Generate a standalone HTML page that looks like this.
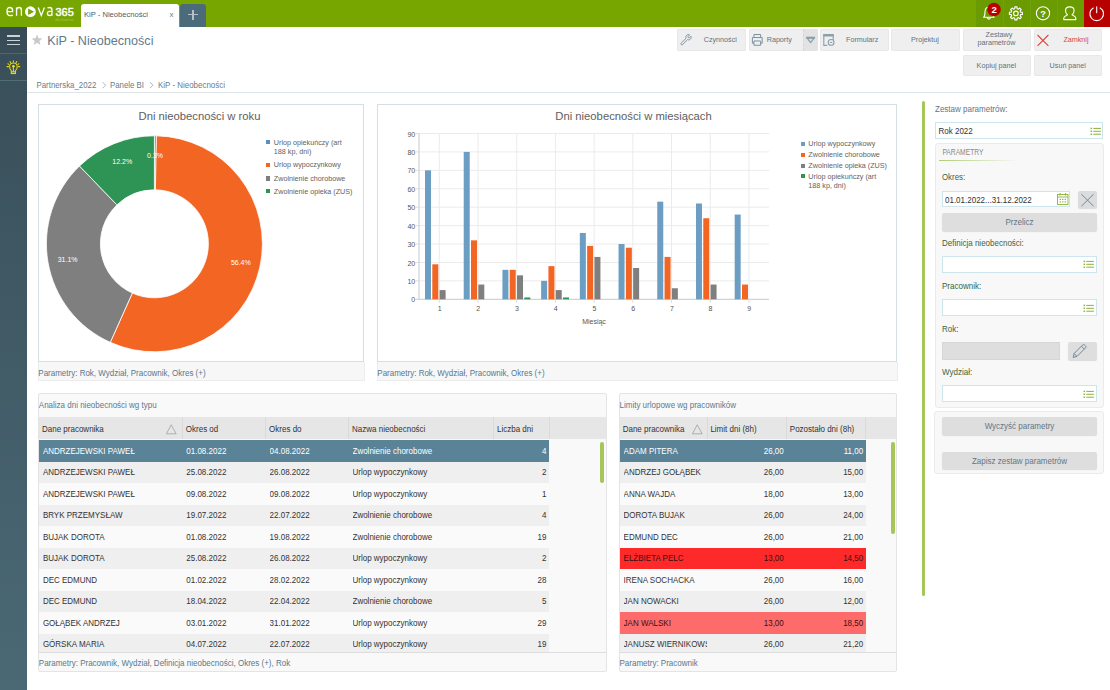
<!DOCTYPE html><html><head><meta charset="utf-8"><title>KiP - Nieobecności</title><style>
*{box-sizing:border-box;margin:0;padding:0}
html,body{width:1110px;height:690px;overflow:hidden;background:#fff;font-family:"Liberation Sans",sans-serif;color:#333}
.a{position:absolute}
.t{position:absolute;white-space:nowrap}
#top{left:0;top:0;width:1110px;height:27px;background:#77a600}
#side{left:0;top:27px;width:27px;height:663px;background:linear-gradient(#374b56 0,#3a505b 8%,#4a6975 100%)}
.tb{position:absolute;height:22px;background:#efefef;border-radius:2px;box-shadow:0 0 0 1px #e8e8e8 inset;font-size:8px;color:#5e7282;line-height:22px;text-align:center}
.panel{position:absolute;border:1px solid #d3dfe3;background:#fff}
.foot{position:absolute;background:#f7f7f7;font-size:8px;color:#58788e;white-space:nowrap}
.hdr{position:absolute;background:#e6e6e6;height:22px}
.hc{position:absolute;top:0;height:22px;line-height:22px;font-size:8px;color:#333;border-left:1px solid #d9d9d9;padding-left:3px;white-space:nowrap}
.row{position:absolute;height:21.6px;font-size:8px;color:#333;line-height:21.6px;white-space:nowrap}
.c{position:absolute;top:0;white-space:nowrap}
.r{text-align:right}
.sel{background:#5b8397;color:#fff;font-weight:bold}
.g{background:#efefef}
.wt{background:#fafafa}
.lbl{position:absolute;font-size:8px;color:#3e6a3e;white-space:nowrap}
.inp{position:absolute;height:17px;background:#fff;border:1px solid #cde5ed}
.btn{position:absolute;background:#dedede;border-radius:2px;box-shadow:0 1px 1px rgba(0,0,0,.12);font-size:8px;color:#5d7485;text-align:center}
</style></head><body>
<div id="top" class="a"></div>
<svg class="a" style="left:0;top:0" width="80" height="27" viewBox="0 0 80 27">
<g fill="none" stroke="#fff" stroke-width="1.3">
<path d="M7.0 11.6 H12.6 V10.6 C12.6 8.4 11.6 7.5 9.8 7.5 C7.9 7.5 7.0 8.7 7.0 11.5 C7.0 14.6 8.0 15.6 10.0 15.6 C11.2 15.6 12.1 15.4 12.8 15.1"/>
<path d="M16.55 7.4 V15.8 M16.55 10.0 C16.55 8.2 17.6 7.5 19.1 7.5 C20.7 7.5 21.4 8.3 21.4 10.0 V15.8"/>
<path d="M38.2 7.4 L41.3 15.5 L44.4 7.4"/>
<path d="M47.5 8.0 C48.1 7.6 48.9 7.5 49.8 7.5 C51.4 7.5 51.95 8.3 51.95 9.9 V15.8 M51.95 11.4 H49.6 C48.1 11.4 47.4 12.3 47.4 13.5 C47.4 14.9 48.2 15.5 49.6 15.5 C50.9 15.5 51.95 14.9 51.95 13.8"/>
</g>
<circle cx="30.4" cy="11.7" r="5.4" fill="#fff"/>
<path d="M28.1 8.4 L28.1 15.0 L34.1 11.7 Z" fill="#77a600"/>
<text x="55.5" y="15.7" font-family="Liberation Sans" font-size="11.4" fill="#fff" stroke="#fff" stroke-width="0.45" textLength="18.2" lengthAdjust="spacingAndGlyphs">365</text>
<text x="55.2" y="20.7" font-family="Liberation Sans" font-size="3" fill="#fff" fill-opacity=".35" textLength="18.6" lengthAdjust="spacingAndGlyphs">dla biznesu</text>
</svg>
<div class="a" style="left:81px;top:4px;width:98px;height:23px;background:#fff;border-radius:3px 3px 0 0"></div>
<div class="t" style="left:84px;top:10px;font-size:7.6px;color:#4c5c6c;line-height:9px">KiP - Nieobecności</div>
<div class="t" style="left:169.5px;top:10px;font-size:8px;color:#6a7a88;line-height:9px">x</div>
<div class="a" style="left:180px;top:4px;width:26px;height:23px;background:#4b6b7b;border-radius:3px 3px 0 0"></div>
<div class="a" style="left:188px;top:13.7px;width:10px;height:1.6px;background:#b4c1c8"></div>
<div class="a" style="left:192.2px;top:9.5px;width:1.6px;height:10px;background:#b4c1c8"></div>
<div class="a" style="left:976px;top:0;width:108px;height:27px;background:#6a9b00"></div>
<div class="a" style="left:1003px;top:0;width:1px;height:27px;background:#71a208"></div>
<div class="a" style="left:1030px;top:0;width:1px;height:27px;background:#71a208"></div>
<div class="a" style="left:1057px;top:0;width:1px;height:27px;background:#71a208"></div>
<div class="a" style="left:1084px;top:0;width:26px;height:27px;background:#b70000"></div>
<svg class="a" style="left:976px;top:0" width="134" height="27" viewBox="0 0 134 27">
<g fill="none" stroke="#fff" stroke-width="1.1" stroke-linecap="round" stroke-linejoin="round">
<path d="M7.6 17.3 C9.0 16.1 9.0 14.3 9.0 11.9 C9.0 9.0 10.7 7.3 12.9 7.3 C15.1 7.3 16.8 9.0 16.8 11.9 C16.8 14.3 16.8 16.1 18.2 17.3 Z"/>
<path d="M11.4 17.5 C11.4 19.6 14.4 19.6 14.4 17.5"/>
<path d="M38.72 8.64 L38.82 6.89 L40.98 6.89 L41.08 8.64 L42.43 9.20 L43.74 8.03 L45.27 9.56 L44.10 10.87 L44.66 12.22 L46.41 12.32 L46.41 14.48 L44.66 14.58 L44.10 15.93 L45.27 17.24 L43.74 18.77 L42.43 17.60 L41.08 18.16 L40.98 19.91 L38.82 19.91 L38.72 18.16 L37.37 17.60 L36.06 18.77 L34.53 17.24 L35.70 15.93 L35.14 14.58 L33.39 14.48 L33.39 12.32 L35.14 12.22 L35.70 10.87 L34.53 9.56 L36.06 8.03 L37.37 9.20 Z"/>
<circle cx="39.9" cy="13.4" r="2.3"/>
<circle cx="67.0" cy="13.3" r="6.6"/>
<path d="M87.8 19.6 L87.8 17.9 C87.8 16.5 90.2 15.7 91.5 14.8 C90.0 13.7 89.5 12.1 89.5 10.6 C89.5 8.2 91.0 6.9 93.8 6.9 C96.6 6.9 98.1 8.2 98.1 10.6 C98.1 12.1 97.6 13.7 96.1 14.8 C97.4 15.7 99.8 16.5 99.8 17.9 L99.8 19.6 Z"/>
<path d="M124.15 8.0 A6.8 6.8 0 1 1 117.25 8.0"/>
<path d="M120.7 6.9 V12.8"/>
</g>
<text x="67.1" y="16.6" text-anchor="middle" font-family="Liberation Sans" font-weight="bold" font-size="9.2" fill="#fff">?</text>
<circle cx="18" cy="9.5" r="6.8" fill="#bb0000"/>
<text x="18.1" y="12.9" text-anchor="middle" font-family="Liberation Sans" font-weight="bold" font-size="9.6" fill="#fff">2</text>
</svg>
<div id="side" class="a"></div>
<div class="a" style="left:0;top:53px;width:27px;height:1px;background:#4a6673"></div>
<div class="a" style="left:0;top:80px;width:27px;height:1px;background:#4f6c78"></div>
<div class="a" style="left:7px;top:35.3px;width:13px;height:1.5px;background:#c9d2d6"></div>
<div class="a" style="left:7px;top:39.5px;width:13px;height:1.5px;background:#c9d2d6"></div>
<div class="a" style="left:7px;top:43.7px;width:13px;height:1.5px;background:#c9d2d6"></div>
<svg class="a" style="left:0;top:54px" width="27" height="26" viewBox="0 0 27 26">
<g fill="none" stroke="#e2d41c" stroke-width="1.1" stroke-linecap="round">
<path d="M11.3 19.4 V16.6 C10.1 15.6 9.6 14.3 9.6 12.8 C9.6 10.5 11.3 9.0 13.4 9.0 C15.5 9.0 17.2 10.5 17.2 12.8 C17.2 14.3 16.7 15.6 15.5 16.6 V19.4 Z"/>
<path d="M13.4 12.4 V17.6 M11.8 17.8 H15.0"/>
<path d="M13.4 6.9 V7.9 M10.0 7.5 L10.6 8.5 M16.8 7.5 L16.2 8.5 M7.9 9.8 L8.8 10.4 M18.9 9.8 L18.0 10.4 M7.0 12.6 H8.5 M18.3 12.6 H19.8"/>
</g>
<rect x="10.9" y="18.9" width="5" height="1.2" fill="#e2d41c"/>
<circle cx="13.4" cy="12.3" r="1.3" fill="#f0e020"/>
</svg>
<svg class="a" style="left:31px;top:34px" width="12" height="12" viewBox="0 0 12 12"><path d="M6 0.6 L7.5 4.2 L11.4 4.5 L8.4 7.0 L9.4 10.9 L6 8.8 L2.6 10.9 L3.6 7.0 L0.6 4.5 L4.5 4.2 Z" fill="#c9c9c9"/></svg>
<div class="t" style="left:47.30px;top:33.99px;font-size:12.6px;line-height:14.49px;color:#62798b;transform:scaleY(1.05);transform-origin:50% 7.07px;">KiP - Nieobecności</div>
<div class="t" style="left:36.50px;top:80.96px;font-size:7.85px;line-height:9.03px;color:#687d8c;transform:scaleY(1.12);transform-origin:50% 4.41px;">Partnerska_2022</div>
<div class="t" style="left:110.00px;top:80.96px;font-size:7.85px;line-height:9.03px;color:#687d8c;transform:scaleY(1.12);transform-origin:50% 4.41px;">Panele BI</div>
<div class="t" style="left:158.00px;top:80.88px;font-size:7.95px;line-height:9.14px;color:#687d8c;transform:scaleY(1.12);transform-origin:50% 4.46px;">KiP - Nieobecności</div>
<svg class="a" style="left:100px;top:80px" width="60" height="10"><path d="M2.7 2.2 L5.6 5.2 L2.7 8.2 M50.0 2.2 L52.9 5.2 L50.0 8.2" fill="none" stroke="#a3afb7" stroke-width="0.9"/></svg>
<div class="a" style="left:27px;top:92px;width:1083px;height:1px;background:#dfe6e9"></div>
<div class="tb" style="left:677px;top:29px;width:69px;height:22px"></div>
<div class="t" style="left:703.7px;top:34.6px;font-size:7.2px;line-height:9px;color:#5e7282">Czynności</div>
<div class="tb" style="left:749px;top:29px;width:69px;height:22px"></div>
<div class="t" style="left:766.7px;top:34.6px;font-size:7.2px;line-height:9px;color:#5e7282">Raporty</div>
<div class="a" style="left:803px;top:29px;width:15px;height:22px;background:#e3e3e3;border-left:1px dashed #d6d6d6;border-radius:0 2px 2px 0"></div>
<svg class="a" style="left:803px;top:29px" width="15" height="22"><path d="M3.6 8.3 H11.6 L7.6 13.6 Z" fill="none" stroke="#8aa0ad" stroke-width="1.2" stroke-linejoin="round"/><rect x="3.4" y="7.9" width="8.4" height="2" fill="#8aa0ad"/></svg>
<div class="tb" style="left:820px;top:29px;width:69px;height:22px"></div>
<div class="t" style="left:846px;top:34.6px;font-size:7.2px;line-height:9px;color:#5e7282">Formularz</div>
<div class="tb" style="left:891px;top:29px;width:69px;height:22px"></div>
<div class="t" style="left:911px;top:34.6px;font-size:7.2px;line-height:9px;color:#5e7282">Projektuj</div>
<div class="tb" style="left:963px;top:29px;width:68px;height:22px"></div>
<div class="t" style="left:985.5px;top:30.4px;font-size:7.2px;line-height:9px;color:#5e7282">Zestawy</div>
<div class="t" style="left:977.5px;top:38.2px;font-size:7.2px;line-height:9px;color:#5e7282">parametrów</div>
<div class="tb" style="left:1034px;top:29px;width:68px;height:22px"></div>
<div class="t" style="left:1063.4px;top:34.6px;font-size:7.2px;line-height:9px;color:#d64a3a">Zamknij</div>
<div class="tb" style="left:963px;top:55px;width:68px;height:21px"></div>
<div class="t" style="left:976.6px;top:61px;font-size:7.2px;line-height:9px;color:#5e7282">Kopiuj panel</div>
<div class="tb" style="left:1034px;top:55px;width:68px;height:21px"></div>
<div class="t" style="left:1049.6px;top:61px;font-size:7.2px;line-height:9px;color:#5e7282">Usuń panel</div>
<svg class="a" style="left:670px;top:25px" width="440" height="30" viewBox="0 0 440 30">
<g fill="none" stroke="#7b909e" stroke-width="1">
<path transform="translate(16,14.7) scale(0.8) translate(-15.4,-14.55)" stroke-width="1.2" d="M11.2 20.6 L17.4 14.4 C18.6 15.0 20.0 14.8 20.9 13.9 C21.9 12.9 22.1 11.4 21.5 10.2 L19.6 12.1 L18.2 11.9 L17.9 10.5 L19.9 8.5 C18.6 7.9 17.1 8.1 16.1 9.1 C15.1 10.1 14.9 11.6 15.5 12.8 L9.3 18.9 C8.8 19.4 8.8 20.1 9.3 20.6 C9.8 21.1 10.7 21.1 11.2 20.6 Z"/>
<path transform="translate(87.3,14.9) scale(0.86) translate(-87.9,-14.75)" stroke-width="1.15" d="M84.0 12.0 V8.5 H91.8 V12.0 M82.2 18.6 V12.0 H93.6 V18.6 H91.8 M84.0 18.6 H82.2 M84.0 16.0 H91.8 V21.0 H84.0 Z"/>
<path d="M157.2 20.4 H153.8 V9.6 H163.2 V15.2" stroke="#8aa0ad" stroke-width="1.1"/><rect x="153.3" y="9.1" width="10.4" height="2.4" fill="#8aa0ad" stroke="none"/><circle cx="161.1" cy="17.4" r="2.9" fill="#efefef" stroke="#8aa0ad" stroke-width="1.1"/><path d="M159.9 17.4 H162.3" stroke="#8aa0ad"/>
</g>
<g fill="none" stroke="#e0453a" stroke-width="1.1">
<path d="M367.5 10.0 L378.4 20.9 M378.4 10.0 L367.5 20.9"/>
</g>
</svg>
<div class="a" style="left:38px;top:104px;width:326px;height:258px;border:1px solid #d3dfe3;background:#fff"></div>
<div class="a" style="left:37.5px;top:362px;width:327px;height:19px;background:#f7f7f7;border:1px solid #ececec;border-top:none"></div>
<div class="a" style="left:377px;top:104px;width:520px;height:258px;border:1px solid #d3dfe3;background:#fff"></div>
<div class="a" style="left:376.5px;top:362px;width:521px;height:19px;background:#f7f7f7;border:1px solid #ececec;border-top:none"></div>
<div class="t" style="left:38.30px;top:368.33px;font-size:8px;line-height:9.2px;color:#58788e;transform:scaleY(1.2);transform-origin:50% 4.49px;">Parametry: Rok, Wydział, Pracownik, Okres (+)</div>
<div class="t" style="left:377.30px;top:368.33px;font-size:8px;line-height:9.2px;color:#58788e;transform:scaleY(1.2);transform-origin:50% 4.49px;">Parametry: Rok, Wydział, Pracownik, Okres (+)</div>
<svg class="a" style="left:0;top:0" width="370" height="370"><path d="M154.40 135.80 A108.0 108.0 0 0 1 156.44 135.82 L155.42 189.81 A54.0 54.0 0 0 0 154.40 189.80 Z" fill="#5b8fc0" stroke="#fff" stroke-width="0.8"/><path d="M156.44 135.82 A108.0 108.0 0 1 1 110.27 342.37 L132.33 293.09 A54.0 54.0 0 1 0 155.42 189.81 Z" fill="#f26522" stroke="#fff" stroke-width="0.8"/><path d="M110.27 342.37 A108.0 108.0 0 0 1 79.49 166.01 L116.94 204.90 A54.0 54.0 0 0 0 132.33 293.09 Z" fill="#7f7f7f" stroke="#fff" stroke-width="0.8"/><path d="M79.49 166.01 A108.0 108.0 0 0 1 154.40 135.80 L154.40 189.80 A54.0 54.0 0 0 0 116.94 204.90 Z" fill="#2e9455" stroke="#fff" stroke-width="0.8"/></svg>
<div class="t" style="left:240.80px;width:0;top:259.15px;font-size:7px;line-height:8.05px;color:#fff;display:flex;justify-content:center;">56.4%</div>
<div class="t" style="left:67.60px;width:0;top:255.85px;font-size:7px;line-height:8.05px;color:#fff;display:flex;justify-content:center;">31.1%</div>
<div class="t" style="left:122.20px;width:0;top:158.45px;font-size:7px;line-height:8.05px;color:#fff;display:flex;justify-content:center;">12.2%</div>
<div class="t" style="left:155.10px;width:0;top:152.45px;font-size:7px;line-height:8.05px;color:#fff;display:flex;justify-content:center;">0.3%</div>
<div class="t" style="left:199.50px;width:0;top:110.13px;font-size:11.25px;line-height:12.94px;color:#5e5e5e;display:flex;justify-content:center;">Dni nieobecności w roku</div>
<div class="a" style="left:266px;top:139.8px;width:4.3px;height:4.3px;background:#5b8fc0"></div>
<div class="t" style="left:273.80px;top:138.57px;font-size:7.2px;line-height:8.28px;color:#5f5f5f;">Urlop opiekuńczy (art</div>
<div class="a" style="left:266px;top:162.6px;width:4.3px;height:4.3px;background:#f26522"></div>
<div class="t" style="left:273.80px;top:161.37px;font-size:7.2px;line-height:8.28px;color:#5f5f5f;">Urlop wypoczynkowy</div>
<div class="a" style="left:266px;top:176.3px;width:4.3px;height:4.3px;background:#7f7f7f"></div>
<div class="t" style="left:273.80px;top:175.07px;font-size:7.2px;line-height:8.28px;color:#5f5f5f;">Zwolnienie chorobowe</div>
<div class="a" style="left:266px;top:189.0px;width:4.3px;height:4.3px;background:#2e9455"></div>
<div class="t" style="left:273.80px;top:187.77px;font-size:7.2px;line-height:8.28px;color:#5f5f5f;">Zwolnienie opieka (ZUS)</div>
<div class="t" style="left:273.80px;top:148.27px;font-size:7.2px;line-height:8.28px;color:#5f5f5f;">188 kp, dni)</div>
<svg class="a" style="left:0;top:0" width="900" height="340"><line x1="419.0" y1="280.88" x2="769.0" y2="280.88" stroke="#ebebeb" stroke-width="1"/><line x1="419.0" y1="262.46" x2="769.0" y2="262.46" stroke="#ebebeb" stroke-width="1"/><line x1="419.0" y1="244.03" x2="769.0" y2="244.03" stroke="#ebebeb" stroke-width="1"/><line x1="419.0" y1="225.61" x2="769.0" y2="225.61" stroke="#ebebeb" stroke-width="1"/><line x1="419.0" y1="207.19" x2="769.0" y2="207.19" stroke="#ebebeb" stroke-width="1"/><line x1="419.0" y1="188.77" x2="769.0" y2="188.77" stroke="#ebebeb" stroke-width="1"/><line x1="419.0" y1="170.34" x2="769.0" y2="170.34" stroke="#ebebeb" stroke-width="1"/><line x1="419.0" y1="151.92" x2="769.0" y2="151.92" stroke="#ebebeb" stroke-width="1"/><line x1="419.0" y1="133.50" x2="769.0" y2="133.50" stroke="#ebebeb" stroke-width="1"/><line x1="439.30" y1="133.5" x2="439.30" y2="299.3" stroke="#ebebeb" stroke-width="1"/><line x1="478.01" y1="133.5" x2="478.01" y2="299.3" stroke="#ebebeb" stroke-width="1"/><line x1="516.72" y1="133.5" x2="516.72" y2="299.3" stroke="#ebebeb" stroke-width="1"/><line x1="555.43" y1="133.5" x2="555.43" y2="299.3" stroke="#ebebeb" stroke-width="1"/><line x1="594.14" y1="133.5" x2="594.14" y2="299.3" stroke="#ebebeb" stroke-width="1"/><line x1="632.85" y1="133.5" x2="632.85" y2="299.3" stroke="#ebebeb" stroke-width="1"/><line x1="671.56" y1="133.5" x2="671.56" y2="299.3" stroke="#ebebeb" stroke-width="1"/><line x1="710.27" y1="133.5" x2="710.27" y2="299.3" stroke="#ebebeb" stroke-width="1"/><line x1="748.98" y1="133.5" x2="748.98" y2="299.3" stroke="#ebebeb" stroke-width="1"/><line x1="419.0" y1="133.5" x2="419.0" y2="299.8" stroke="#c8c8c8" stroke-width="1"/><line x1="416.0" y1="299.30" x2="769.0" y2="299.30" stroke="#c8c8c8" stroke-width="1"/><line x1="415.5" y1="299.30" x2="419.0" y2="299.30" stroke="#dcdcdc" stroke-width="1"/><line x1="415.5" y1="280.88" x2="419.0" y2="280.88" stroke="#dcdcdc" stroke-width="1"/><line x1="415.5" y1="262.46" x2="419.0" y2="262.46" stroke="#dcdcdc" stroke-width="1"/><line x1="415.5" y1="244.03" x2="419.0" y2="244.03" stroke="#dcdcdc" stroke-width="1"/><line x1="415.5" y1="225.61" x2="419.0" y2="225.61" stroke="#dcdcdc" stroke-width="1"/><line x1="415.5" y1="207.19" x2="419.0" y2="207.19" stroke="#dcdcdc" stroke-width="1"/><line x1="415.5" y1="188.77" x2="419.0" y2="188.77" stroke="#dcdcdc" stroke-width="1"/><line x1="415.5" y1="170.34" x2="419.0" y2="170.34" stroke="#dcdcdc" stroke-width="1"/><line x1="415.5" y1="151.92" x2="419.0" y2="151.92" stroke="#dcdcdc" stroke-width="1"/><line x1="415.5" y1="133.50" x2="419.0" y2="133.50" stroke="#dcdcdc" stroke-width="1"/><line x1="439.30" y1="299.3" x2="439.30" y2="302.8" stroke="#dcdcdc" stroke-width="1"/><line x1="478.01" y1="299.3" x2="478.01" y2="302.8" stroke="#dcdcdc" stroke-width="1"/><line x1="516.72" y1="299.3" x2="516.72" y2="302.8" stroke="#dcdcdc" stroke-width="1"/><line x1="555.43" y1="299.3" x2="555.43" y2="302.8" stroke="#dcdcdc" stroke-width="1"/><line x1="594.14" y1="299.3" x2="594.14" y2="302.8" stroke="#dcdcdc" stroke-width="1"/><line x1="632.85" y1="299.3" x2="632.85" y2="302.8" stroke="#dcdcdc" stroke-width="1"/><line x1="671.56" y1="299.3" x2="671.56" y2="302.8" stroke="#dcdcdc" stroke-width="1"/><line x1="710.27" y1="299.3" x2="710.27" y2="302.8" stroke="#dcdcdc" stroke-width="1"/><line x1="748.98" y1="299.3" x2="748.98" y2="302.8" stroke="#dcdcdc" stroke-width="1"/><rect x="425.00" y="170.34" width="6.00" height="128.96" fill="#6b9ec2"/><rect x="432.30" y="264.30" width="6.00" height="35.00" fill="#f26522"/><rect x="439.60" y="290.09" width="6.00" height="9.21" fill="#7f7f7f"/><rect x="463.71" y="151.92" width="6.00" height="147.38" fill="#6b9ec2"/><rect x="471.01" y="240.35" width="6.00" height="58.95" fill="#f26522"/><rect x="478.31" y="284.56" width="6.00" height="14.74" fill="#7f7f7f"/><rect x="502.42" y="269.82" width="6.00" height="29.48" fill="#6b9ec2"/><rect x="509.72" y="269.82" width="6.00" height="29.48" fill="#f26522"/><rect x="517.02" y="275.35" width="6.00" height="23.95" fill="#7f7f7f"/><rect x="524.32" y="297.46" width="6.00" height="1.84" fill="#2e9455"/><rect x="541.13" y="280.88" width="6.00" height="18.42" fill="#6b9ec2"/><rect x="548.43" y="266.14" width="6.00" height="33.16" fill="#f26522"/><rect x="555.73" y="290.09" width="6.00" height="9.21" fill="#7f7f7f"/><rect x="563.03" y="297.46" width="6.00" height="1.84" fill="#2e9455"/><rect x="579.84" y="232.98" width="6.00" height="66.32" fill="#6b9ec2"/><rect x="587.14" y="245.88" width="6.00" height="53.42" fill="#f26522"/><rect x="594.44" y="256.93" width="6.00" height="42.37" fill="#7f7f7f"/><rect x="618.55" y="244.03" width="6.00" height="55.27" fill="#6b9ec2"/><rect x="625.85" y="247.72" width="6.00" height="51.58" fill="#f26522"/><rect x="633.15" y="267.98" width="6.00" height="31.32" fill="#7f7f7f"/><rect x="657.26" y="201.66" width="6.00" height="97.64" fill="#6b9ec2"/><rect x="664.56" y="256.93" width="6.00" height="42.37" fill="#f26522"/><rect x="671.86" y="288.25" width="6.00" height="11.05" fill="#7f7f7f"/><rect x="695.97" y="203.50" width="6.00" height="95.80" fill="#6b9ec2"/><rect x="703.27" y="218.24" width="6.00" height="81.06" fill="#f26522"/><rect x="710.57" y="284.56" width="6.00" height="14.74" fill="#7f7f7f"/><rect x="734.68" y="214.56" width="6.00" height="84.74" fill="#6b9ec2"/><rect x="741.98" y="284.56" width="6.00" height="14.74" fill="#f26522"/></svg>
<div class="t" style="right:694.80px;top:296.35px;font-size:7px;line-height:8.05px;color:#555;">0</div>
<div class="t" style="right:694.80px;top:277.93px;font-size:7px;line-height:8.05px;color:#555;">10</div>
<div class="t" style="right:694.80px;top:259.51px;font-size:7px;line-height:8.05px;color:#555;">20</div>
<div class="t" style="right:694.80px;top:241.08px;font-size:7px;line-height:8.05px;color:#555;">30</div>
<div class="t" style="right:694.80px;top:222.66px;font-size:7px;line-height:8.05px;color:#555;">40</div>
<div class="t" style="right:694.80px;top:204.24px;font-size:7px;line-height:8.05px;color:#555;">50</div>
<div class="t" style="right:694.80px;top:185.82px;font-size:7px;line-height:8.05px;color:#555;">60</div>
<div class="t" style="right:694.80px;top:167.39px;font-size:7px;line-height:8.05px;color:#555;">70</div>
<div class="t" style="right:694.80px;top:148.97px;font-size:7px;line-height:8.05px;color:#555;">80</div>
<div class="t" style="right:694.80px;top:130.55px;font-size:7px;line-height:8.05px;color:#555;">90</div>
<div class="t" style="left:439.60px;width:0;top:304.75px;font-size:7px;line-height:8.05px;color:#555;display:flex;justify-content:center;">1</div>
<div class="t" style="left:478.31px;width:0;top:304.75px;font-size:7px;line-height:8.05px;color:#555;display:flex;justify-content:center;">2</div>
<div class="t" style="left:517.02px;width:0;top:304.75px;font-size:7px;line-height:8.05px;color:#555;display:flex;justify-content:center;">3</div>
<div class="t" style="left:555.73px;width:0;top:304.75px;font-size:7px;line-height:8.05px;color:#555;display:flex;justify-content:center;">4</div>
<div class="t" style="left:594.44px;width:0;top:304.75px;font-size:7px;line-height:8.05px;color:#555;display:flex;justify-content:center;">5</div>
<div class="t" style="left:633.15px;width:0;top:304.75px;font-size:7px;line-height:8.05px;color:#555;display:flex;justify-content:center;">6</div>
<div class="t" style="left:671.86px;width:0;top:304.75px;font-size:7px;line-height:8.05px;color:#555;display:flex;justify-content:center;">7</div>
<div class="t" style="left:710.57px;width:0;top:304.75px;font-size:7px;line-height:8.05px;color:#555;display:flex;justify-content:center;">8</div>
<div class="t" style="left:749.28px;width:0;top:304.75px;font-size:7px;line-height:8.05px;color:#555;display:flex;justify-content:center;">9</div>
<div class="t" style="left:594.00px;width:0;top:317.55px;font-size:7px;line-height:8.05px;color:#555;display:flex;justify-content:center;">Miesiąc</div>
<div class="t" style="left:633.50px;width:0;top:110.13px;font-size:11.25px;line-height:12.94px;color:#5e5e5e;display:flex;justify-content:center;">Dni nieobecności w miesiącach</div>
<div class="a" style="left:801px;top:141.7px;width:4.3px;height:4.3px;background:#6b9ec2"></div>
<div class="t" style="left:808.30px;top:140.07px;font-size:7.2px;line-height:8.28px;color:#5f5f5f;">Urlop wypoczynkowy</div>
<div class="a" style="left:801px;top:152.6px;width:4.3px;height:4.3px;background:#f26522"></div>
<div class="t" style="left:808.30px;top:150.97px;font-size:7.2px;line-height:8.28px;color:#5f5f5f;">Zwolnienie chorobowe</div>
<div class="a" style="left:801px;top:163.6px;width:4.3px;height:4.3px;background:#7f7f7f"></div>
<div class="t" style="left:808.30px;top:161.97px;font-size:7.2px;line-height:8.28px;color:#5f5f5f;">Zwolnienie opieka (ZUS)</div>
<div class="a" style="left:801px;top:174.2px;width:4.3px;height:4.3px;background:#2e9455"></div>
<div class="t" style="left:808.30px;top:172.57px;font-size:7.2px;line-height:8.28px;color:#5f5f5f;">Urlop opiekuńczy (art</div>
<div class="t" style="left:808.30px;top:182.27px;font-size:7.2px;line-height:8.28px;color:#5f5f5f;">188 kp, dni)</div>
<div class="a" style="left:38.0px;top:393px;width:568.5px;height:278.5px;background:#f9f9f9;border:1px solid #e4e4e4;border-radius:2px"></div>
<div class="t" style="left:38.80px;top:400.13px;font-size:8px;line-height:9.2px;color:#5a7a90;transform:scaleY(1.2);transform-origin:50% 4.49px;">Analiza dni nieobecności wg typu</div>
<div class="a" style="left:39.0px;top:417.2px;width:566.5px;height:22.2px;background:#e6e6e6"></div>
<div class="a" style="left:181.9px;top:417.2px;width:1px;height:22.2px;background:#dadada"></div>
<div class="a" style="left:265.2px;top:417.2px;width:1px;height:22.2px;background:#dadada"></div>
<div class="a" style="left:348.1px;top:417.2px;width:1px;height:22.2px;background:#dadada"></div>
<div class="a" style="left:493.1px;top:417.2px;width:1px;height:22.2px;background:#dadada"></div>
<div class="a" style="left:548.5px;top:417.2px;width:1px;height:22.2px;background:#dadada"></div>
<div class="t" style="left:42.00px;top:423.93px;font-size:8px;line-height:9.2px;color:#333;transform:scaleY(1.2);transform-origin:50% 4.49px;">Dane pracownika</div>
<div class="t" style="left:185.80px;top:423.93px;font-size:8px;line-height:9.2px;color:#333;transform:scaleY(1.2);transform-origin:50% 4.49px;">Okres od</div>
<div class="t" style="left:269.10px;top:423.93px;font-size:8px;line-height:9.2px;color:#333;transform:scaleY(1.2);transform-origin:50% 4.49px;">Okres do</div>
<div class="t" style="left:352.00px;top:423.93px;font-size:8px;line-height:9.2px;color:#333;transform:scaleY(1.2);transform-origin:50% 4.49px;">Nazwa nieobecności</div>
<div class="t" style="left:497.00px;top:423.93px;font-size:8px;line-height:9.2px;color:#333;transform:scaleY(1.2);transform-origin:50% 4.49px;">Liczba dni</div>
<div class="a" style="left:39.0px;top:439.4px;width:510.0px;height:0.8px;background:#f7f7f7"></div>
<div class="a" style="left:39.0px;top:440.2px;width:510.0px;height:212.0px;overflow:hidden">
<div class="a" style="left:0;top:0.00px;width:510.0px;height:21.50px;background:#5b8397;color:#fff;font-weight:normal;font-size:8px">
<div class="t" style="left:3.9px;top:6.5px;line-height:9.2px;width:139.5px;overflow:hidden;transform:scaleY(1.2);transform-origin:0 4.9px">ANDRZEJEWSKI PAWEŁ</div>
<div class="t" style="left:147.3px;top:6.5px;line-height:9.2px;width:79.3px;overflow:hidden;transform:scaleY(1.2);transform-origin:0 4.9px">01.08.2022</div>
<div class="t" style="left:230.6px;top:6.5px;line-height:9.2px;width:78.9px;overflow:hidden;transform:scaleY(1.2);transform-origin:0 4.9px">04.08.2022</div>
<div class="t" style="left:313.5px;top:6.5px;line-height:9.2px;width:141.0px;overflow:hidden;transform:scaleY(1.2);transform-origin:0 4.9px">Zwolnienie chorobowe</div>
<div class="t" style="right:2.6px;top:6.5px;line-height:9.2px;text-align:right;transform:scaleY(1.2);transform-origin:0 4.9px">4</div>
</div>
<div class="a" style="left:0;top:21.50px;width:510.0px;height:21.50px;background:#efefef;color:#333;font-weight:normal;font-size:8px">
<div class="t" style="left:3.9px;top:6.5px;line-height:9.2px;width:139.5px;overflow:hidden;transform:scaleY(1.2);transform-origin:0 4.9px">ANDRZEJEWSKI PAWEŁ</div>
<div class="t" style="left:147.3px;top:6.5px;line-height:9.2px;width:79.3px;overflow:hidden;transform:scaleY(1.2);transform-origin:0 4.9px">25.08.2022</div>
<div class="t" style="left:230.6px;top:6.5px;line-height:9.2px;width:78.9px;overflow:hidden;transform:scaleY(1.2);transform-origin:0 4.9px">26.08.2022</div>
<div class="t" style="left:313.5px;top:6.5px;line-height:9.2px;width:141.0px;overflow:hidden;transform:scaleY(1.2);transform-origin:0 4.9px">Urlop wypoczynkowy</div>
<div class="t" style="right:2.6px;top:6.5px;line-height:9.2px;text-align:right;transform:scaleY(1.2);transform-origin:0 4.9px">2</div>
</div>
<div class="a" style="left:0;top:43.00px;width:510.0px;height:21.50px;background:#fafafa;color:#333;font-weight:normal;font-size:8px">
<div class="t" style="left:3.9px;top:6.5px;line-height:9.2px;width:139.5px;overflow:hidden;transform:scaleY(1.2);transform-origin:0 4.9px">ANDRZEJEWSKI PAWEŁ</div>
<div class="t" style="left:147.3px;top:6.5px;line-height:9.2px;width:79.3px;overflow:hidden;transform:scaleY(1.2);transform-origin:0 4.9px">09.08.2022</div>
<div class="t" style="left:230.6px;top:6.5px;line-height:9.2px;width:78.9px;overflow:hidden;transform:scaleY(1.2);transform-origin:0 4.9px">09.08.2022</div>
<div class="t" style="left:313.5px;top:6.5px;line-height:9.2px;width:141.0px;overflow:hidden;transform:scaleY(1.2);transform-origin:0 4.9px">Urlop wypoczynkowy</div>
<div class="t" style="right:2.6px;top:6.5px;line-height:9.2px;text-align:right;transform:scaleY(1.2);transform-origin:0 4.9px">1</div>
</div>
<div class="a" style="left:0;top:64.50px;width:510.0px;height:21.50px;background:#efefef;color:#333;font-weight:normal;font-size:8px">
<div class="t" style="left:3.9px;top:6.5px;line-height:9.2px;width:139.5px;overflow:hidden;transform:scaleY(1.2);transform-origin:0 4.9px">BRYK PRZEMYSŁAW</div>
<div class="t" style="left:147.3px;top:6.5px;line-height:9.2px;width:79.3px;overflow:hidden;transform:scaleY(1.2);transform-origin:0 4.9px">19.07.2022</div>
<div class="t" style="left:230.6px;top:6.5px;line-height:9.2px;width:78.9px;overflow:hidden;transform:scaleY(1.2);transform-origin:0 4.9px">22.07.2022</div>
<div class="t" style="left:313.5px;top:6.5px;line-height:9.2px;width:141.0px;overflow:hidden;transform:scaleY(1.2);transform-origin:0 4.9px">Zwolnienie chorobowe</div>
<div class="t" style="right:2.6px;top:6.5px;line-height:9.2px;text-align:right;transform:scaleY(1.2);transform-origin:0 4.9px">4</div>
</div>
<div class="a" style="left:0;top:86.00px;width:510.0px;height:21.50px;background:#fafafa;color:#333;font-weight:normal;font-size:8px">
<div class="t" style="left:3.9px;top:6.5px;line-height:9.2px;width:139.5px;overflow:hidden;transform:scaleY(1.2);transform-origin:0 4.9px">BUJAK DOROTA</div>
<div class="t" style="left:147.3px;top:6.5px;line-height:9.2px;width:79.3px;overflow:hidden;transform:scaleY(1.2);transform-origin:0 4.9px">01.08.2022</div>
<div class="t" style="left:230.6px;top:6.5px;line-height:9.2px;width:78.9px;overflow:hidden;transform:scaleY(1.2);transform-origin:0 4.9px">19.08.2022</div>
<div class="t" style="left:313.5px;top:6.5px;line-height:9.2px;width:141.0px;overflow:hidden;transform:scaleY(1.2);transform-origin:0 4.9px">Zwolnienie chorobowe</div>
<div class="t" style="right:2.6px;top:6.5px;line-height:9.2px;text-align:right;transform:scaleY(1.2);transform-origin:0 4.9px">19</div>
</div>
<div class="a" style="left:0;top:107.50px;width:510.0px;height:21.50px;background:#efefef;color:#333;font-weight:normal;font-size:8px">
<div class="t" style="left:3.9px;top:6.5px;line-height:9.2px;width:139.5px;overflow:hidden;transform:scaleY(1.2);transform-origin:0 4.9px">BUJAK DOROTA</div>
<div class="t" style="left:147.3px;top:6.5px;line-height:9.2px;width:79.3px;overflow:hidden;transform:scaleY(1.2);transform-origin:0 4.9px">25.08.2022</div>
<div class="t" style="left:230.6px;top:6.5px;line-height:9.2px;width:78.9px;overflow:hidden;transform:scaleY(1.2);transform-origin:0 4.9px">26.08.2022</div>
<div class="t" style="left:313.5px;top:6.5px;line-height:9.2px;width:141.0px;overflow:hidden;transform:scaleY(1.2);transform-origin:0 4.9px">Urlop wypoczynkowy</div>
<div class="t" style="right:2.6px;top:6.5px;line-height:9.2px;text-align:right;transform:scaleY(1.2);transform-origin:0 4.9px">2</div>
</div>
<div class="a" style="left:0;top:129.00px;width:510.0px;height:21.50px;background:#fafafa;color:#333;font-weight:normal;font-size:8px">
<div class="t" style="left:3.9px;top:6.5px;line-height:9.2px;width:139.5px;overflow:hidden;transform:scaleY(1.2);transform-origin:0 4.9px">DEC EDMUND</div>
<div class="t" style="left:147.3px;top:6.5px;line-height:9.2px;width:79.3px;overflow:hidden;transform:scaleY(1.2);transform-origin:0 4.9px">01.02.2022</div>
<div class="t" style="left:230.6px;top:6.5px;line-height:9.2px;width:78.9px;overflow:hidden;transform:scaleY(1.2);transform-origin:0 4.9px">28.02.2022</div>
<div class="t" style="left:313.5px;top:6.5px;line-height:9.2px;width:141.0px;overflow:hidden;transform:scaleY(1.2);transform-origin:0 4.9px">Urlop wypoczynkowy</div>
<div class="t" style="right:2.6px;top:6.5px;line-height:9.2px;text-align:right;transform:scaleY(1.2);transform-origin:0 4.9px">28</div>
</div>
<div class="a" style="left:0;top:150.50px;width:510.0px;height:21.50px;background:#efefef;color:#333;font-weight:normal;font-size:8px">
<div class="t" style="left:3.9px;top:6.5px;line-height:9.2px;width:139.5px;overflow:hidden;transform:scaleY(1.2);transform-origin:0 4.9px">DEC EDMUND</div>
<div class="t" style="left:147.3px;top:6.5px;line-height:9.2px;width:79.3px;overflow:hidden;transform:scaleY(1.2);transform-origin:0 4.9px">18.04.2022</div>
<div class="t" style="left:230.6px;top:6.5px;line-height:9.2px;width:78.9px;overflow:hidden;transform:scaleY(1.2);transform-origin:0 4.9px">22.04.2022</div>
<div class="t" style="left:313.5px;top:6.5px;line-height:9.2px;width:141.0px;overflow:hidden;transform:scaleY(1.2);transform-origin:0 4.9px">Zwolnienie chorobowe</div>
<div class="t" style="right:2.6px;top:6.5px;line-height:9.2px;text-align:right;transform:scaleY(1.2);transform-origin:0 4.9px">5</div>
</div>
<div class="a" style="left:0;top:172.00px;width:510.0px;height:21.50px;background:#fafafa;color:#333;font-weight:normal;font-size:8px">
<div class="t" style="left:3.9px;top:6.5px;line-height:9.2px;width:139.5px;overflow:hidden;transform:scaleY(1.2);transform-origin:0 4.9px">GOŁĄBEK ANDRZEJ</div>
<div class="t" style="left:147.3px;top:6.5px;line-height:9.2px;width:79.3px;overflow:hidden;transform:scaleY(1.2);transform-origin:0 4.9px">03.01.2022</div>
<div class="t" style="left:230.6px;top:6.5px;line-height:9.2px;width:78.9px;overflow:hidden;transform:scaleY(1.2);transform-origin:0 4.9px">31.01.2022</div>
<div class="t" style="left:313.5px;top:6.5px;line-height:9.2px;width:141.0px;overflow:hidden;transform:scaleY(1.2);transform-origin:0 4.9px">Urlop wypoczynkowy</div>
<div class="t" style="right:2.6px;top:6.5px;line-height:9.2px;text-align:right;transform:scaleY(1.2);transform-origin:0 4.9px">29</div>
</div>
<div class="a" style="left:0;top:193.50px;width:510.0px;height:21.50px;background:#efefef;color:#333;font-weight:normal;font-size:8px">
<div class="t" style="left:3.9px;top:6.5px;line-height:9.2px;width:139.5px;overflow:hidden;transform:scaleY(1.2);transform-origin:0 4.9px">GÓRSKA MARIA</div>
<div class="t" style="left:147.3px;top:6.5px;line-height:9.2px;width:79.3px;overflow:hidden;transform:scaleY(1.2);transform-origin:0 4.9px">04.07.2022</div>
<div class="t" style="left:230.6px;top:6.5px;line-height:9.2px;width:78.9px;overflow:hidden;transform:scaleY(1.2);transform-origin:0 4.9px">22.07.2022</div>
<div class="t" style="left:313.5px;top:6.5px;line-height:9.2px;width:141.0px;overflow:hidden;transform:scaleY(1.2);transform-origin:0 4.9px">Urlop wypoczynkowy</div>
<div class="t" style="right:2.6px;top:6.5px;line-height:9.2px;text-align:right;transform:scaleY(1.2);transform-origin:0 4.9px">19</div>
</div>
</div>
<div class="a" style="left:39.0px;top:652.2px;width:566.5px;height:1px;background:#dddddd"></div>
<div class="a" style="left:600.0px;top:442.0px;width:3.8px;height:40.5px;background:#a6c65a;border-radius:2px"></div>
<div class="t" style="left:38.80px;top:658.43px;font-size:8px;line-height:9.2px;color:#58788e;transform:scaleY(1.2);transform-origin:50% 4.49px;">Parametry: Pracownik, Wydział, Definicja nieobecności, Okres (+), Rok</div>
<div class="a" style="left:618.7px;top:393px;width:278.6px;height:278.5px;background:#f9f9f9;border:1px solid #e4e4e4;border-radius:2px"></div>
<div class="t" style="left:619.50px;top:400.13px;font-size:8px;line-height:9.2px;color:#5a7a90;transform:scaleY(1.2);transform-origin:50% 4.49px;">Limity urlopowe wg pracowników</div>
<div class="a" style="left:619.7px;top:417.2px;width:276.6px;height:22.2px;background:#e6e6e6"></div>
<div class="a" style="left:706.5px;top:417.2px;width:1px;height:22.2px;background:#dadada"></div>
<div class="a" style="left:785.9px;top:417.2px;width:1px;height:22.2px;background:#dadada"></div>
<div class="a" style="left:865.3px;top:417.2px;width:1px;height:22.2px;background:#dadada"></div>
<div class="t" style="left:622.70px;top:423.93px;font-size:8px;line-height:9.2px;color:#333;transform:scaleY(1.2);transform-origin:50% 4.49px;">Dane pracownika</div>
<div class="t" style="left:710.40px;top:423.93px;font-size:8px;line-height:9.2px;color:#333;transform:scaleY(1.2);transform-origin:50% 4.49px;">Limit dni (8h)</div>
<div class="t" style="left:789.80px;top:423.93px;font-size:8px;line-height:9.2px;color:#333;transform:scaleY(1.2);transform-origin:50% 4.49px;">Pozostało dni (8h)</div>
<div class="a" style="left:619.7px;top:439.4px;width:246.1px;height:0.8px;background:#f7f7f7"></div>
<div class="a" style="left:619.7px;top:440.2px;width:246.1px;height:212.0px;overflow:hidden">
<div class="a" style="left:0;top:0.00px;width:246.1px;height:21.50px;background:#5b8397;color:#fff;font-weight:normal;font-size:8px">
<div class="t" style="left:3.9px;top:6.5px;line-height:9.2px;width:83.3px;overflow:hidden;transform:scaleY(1.2);transform-origin:0 4.9px">ADAM PITERA</div>
<div class="t" style="right:82.0px;top:6.5px;line-height:9.2px;text-align:right;transform:scaleY(1.2);transform-origin:0 4.9px">26,00</div>
<div class="t" style="right:2.6px;top:6.5px;line-height:9.2px;text-align:right;transform:scaleY(1.2);transform-origin:0 4.9px">11,00</div>
</div>
<div class="a" style="left:0;top:21.50px;width:246.1px;height:21.50px;background:#efefef;color:#333;font-weight:normal;font-size:8px">
<div class="t" style="left:3.9px;top:6.5px;line-height:9.2px;width:83.3px;overflow:hidden;transform:scaleY(1.2);transform-origin:0 4.9px">ANDRZEJ GOŁĄBEK</div>
<div class="t" style="right:82.0px;top:6.5px;line-height:9.2px;text-align:right;transform:scaleY(1.2);transform-origin:0 4.9px">26,00</div>
<div class="t" style="right:2.6px;top:6.5px;line-height:9.2px;text-align:right;transform:scaleY(1.2);transform-origin:0 4.9px">15,00</div>
</div>
<div class="a" style="left:0;top:43.00px;width:246.1px;height:21.50px;background:#fafafa;color:#333;font-weight:normal;font-size:8px">
<div class="t" style="left:3.9px;top:6.5px;line-height:9.2px;width:83.3px;overflow:hidden;transform:scaleY(1.2);transform-origin:0 4.9px">ANNA WAJDA</div>
<div class="t" style="right:82.0px;top:6.5px;line-height:9.2px;text-align:right;transform:scaleY(1.2);transform-origin:0 4.9px">18,00</div>
<div class="t" style="right:2.6px;top:6.5px;line-height:9.2px;text-align:right;transform:scaleY(1.2);transform-origin:0 4.9px">13,00</div>
</div>
<div class="a" style="left:0;top:64.50px;width:246.1px;height:21.50px;background:#efefef;color:#333;font-weight:normal;font-size:8px">
<div class="t" style="left:3.9px;top:6.5px;line-height:9.2px;width:83.3px;overflow:hidden;transform:scaleY(1.2);transform-origin:0 4.9px">DOROTA BUJAK</div>
<div class="t" style="right:82.0px;top:6.5px;line-height:9.2px;text-align:right;transform:scaleY(1.2);transform-origin:0 4.9px">26,00</div>
<div class="t" style="right:2.6px;top:6.5px;line-height:9.2px;text-align:right;transform:scaleY(1.2);transform-origin:0 4.9px">24,00</div>
</div>
<div class="a" style="left:0;top:86.00px;width:246.1px;height:21.50px;background:#fafafa;color:#333;font-weight:normal;font-size:8px">
<div class="t" style="left:3.9px;top:6.5px;line-height:9.2px;width:83.3px;overflow:hidden;transform:scaleY(1.2);transform-origin:0 4.9px">EDMUND DEC</div>
<div class="t" style="right:82.0px;top:6.5px;line-height:9.2px;text-align:right;transform:scaleY(1.2);transform-origin:0 4.9px">26,00</div>
<div class="t" style="right:2.6px;top:6.5px;line-height:9.2px;text-align:right;transform:scaleY(1.2);transform-origin:0 4.9px">21,00</div>
</div>
<div class="a" style="left:0;top:107.50px;width:246.1px;height:21.50px;background:#fe2a2a;color:#3a1010;font-weight:normal;font-size:8px">
<div class="t" style="left:3.9px;top:6.5px;line-height:9.2px;width:83.3px;overflow:hidden;transform:scaleY(1.2);transform-origin:0 4.9px">ELŻBIETA PELC</div>
<div class="t" style="right:82.0px;top:6.5px;line-height:9.2px;text-align:right;transform:scaleY(1.2);transform-origin:0 4.9px">13,00</div>
<div class="t" style="right:2.6px;top:6.5px;line-height:9.2px;text-align:right;transform:scaleY(1.2);transform-origin:0 4.9px">14,50</div>
</div>
<div class="a" style="left:0;top:129.00px;width:246.1px;height:21.50px;background:#fafafa;color:#333;font-weight:normal;font-size:8px">
<div class="t" style="left:3.9px;top:6.5px;line-height:9.2px;width:83.3px;overflow:hidden;transform:scaleY(1.2);transform-origin:0 4.9px">IRENA SOCHACKA</div>
<div class="t" style="right:82.0px;top:6.5px;line-height:9.2px;text-align:right;transform:scaleY(1.2);transform-origin:0 4.9px">26,00</div>
<div class="t" style="right:2.6px;top:6.5px;line-height:9.2px;text-align:right;transform:scaleY(1.2);transform-origin:0 4.9px">16,00</div>
</div>
<div class="a" style="left:0;top:150.50px;width:246.1px;height:21.50px;background:#efefef;color:#333;font-weight:normal;font-size:8px">
<div class="t" style="left:3.9px;top:6.5px;line-height:9.2px;width:83.3px;overflow:hidden;transform:scaleY(1.2);transform-origin:0 4.9px">JAN NOWACKI</div>
<div class="t" style="right:82.0px;top:6.5px;line-height:9.2px;text-align:right;transform:scaleY(1.2);transform-origin:0 4.9px">26,00</div>
<div class="t" style="right:2.6px;top:6.5px;line-height:9.2px;text-align:right;transform:scaleY(1.2);transform-origin:0 4.9px">12,00</div>
</div>
<div class="a" style="left:0;top:172.00px;width:246.1px;height:21.50px;background:#fe6b6b;color:#3a1010;font-weight:normal;font-size:8px">
<div class="t" style="left:3.9px;top:6.5px;line-height:9.2px;width:83.3px;overflow:hidden;transform:scaleY(1.2);transform-origin:0 4.9px">JAN WALSKI</div>
<div class="t" style="right:82.0px;top:6.5px;line-height:9.2px;text-align:right;transform:scaleY(1.2);transform-origin:0 4.9px">13,00</div>
<div class="t" style="right:2.6px;top:6.5px;line-height:9.2px;text-align:right;transform:scaleY(1.2);transform-origin:0 4.9px">18,50</div>
</div>
<div class="a" style="left:0;top:193.50px;width:246.1px;height:21.50px;background:#efefef;color:#333;font-weight:normal;font-size:8px">
<div class="t" style="left:3.9px;top:6.5px;line-height:9.2px;width:83.3px;overflow:hidden;transform:scaleY(1.2);transform-origin:0 4.9px">JANUSZ WIERNIKOWSKI</div>
<div class="t" style="right:82.0px;top:6.5px;line-height:9.2px;text-align:right;transform:scaleY(1.2);transform-origin:0 4.9px">26,00</div>
<div class="t" style="right:2.6px;top:6.5px;line-height:9.2px;text-align:right;transform:scaleY(1.2);transform-origin:0 4.9px">21,20</div>
</div>
</div>
<div class="a" style="left:619.7px;top:652.2px;width:276.6px;height:1px;background:#dddddd"></div>
<div class="a" style="left:891.0px;top:442.0px;width:3.8px;height:92.3px;background:#a6c65a;border-radius:2px"></div>
<div class="t" style="left:619.50px;top:658.43px;font-size:8px;line-height:9.2px;color:#58788e;transform:scaleY(1.2);transform-origin:50% 4.49px;">Parametry: Pracownik</div>
<svg class="a" style="left:166px;top:423.5px" width="11" height="11"><path d="M5.2 0.8 L10.2 9.8 H0.4 Z" fill="none" stroke="#a8a8a8" stroke-width="0.9"/></svg>
<svg class="a" style="left:691.5px;top:423.5px" width="11" height="11"><path d="M5.2 0.8 L10.2 9.8 H0.4 Z" fill="none" stroke="#a8a8a8" stroke-width="0.9"/></svg>
<div class="a" style="left:921.8px;top:101px;width:3.4px;height:494.5px;background:#a5c65a;border-radius:2px"></div>
<div class="t" style="left:935.00px;top:104.33px;font-size:8px;line-height:9.2px;color:#5f7585;transform:scaleY(1.2);transform-origin:50% 4.49px;">Zestaw parametrów:</div>
<div class="inp" style="left:935px;top:122.2px;width:168px;height:16.6px"></div>
<div class="t" style="left:938.50px;top:126.43px;font-size:8px;line-height:9.2px;color:#333;transform:scaleY(1.2);transform-origin:50% 4.49px;">Rok 2022</div>
<svg class="a" style="left:1089.5px;top:127.0px" width="12" height="9" viewBox="0 0 12 9"><g fill="#8cb33a"><rect x="0.5" y="0.7" width="1.6" height="1.4"/><rect x="0.5" y="3.6" width="1.6" height="1.4"/><rect x="0.5" y="6.5" width="1.6" height="1.4"/><rect x="3.3" y="0.9" width="7.6" height="1"/><rect x="3.3" y="3.8" width="7.6" height="1"/><rect x="3.3" y="6.7" width="7.6" height="1"/></g></svg>
<div class="a" style="left:934.6px;top:143.2px;width:169px;height:264.5px;background:#f8f8f8;border:1px solid #ebebeb;border-radius:3px"></div>
<div class="t" style="left:942.40px;top:148.93px;font-size:6.7px;line-height:7.7px;color:#888;transform:scaleY(1.22);transform-origin:50% 3.76px;">PARAMETRY</div>
<div class="a" style="left:939px;top:160.2px;width:80px;height:1px;background:linear-gradient(90deg,#b0cc78,rgba(181,207,128,0))"></div>
<div class="t" style="left:942.00px;top:172.46px;font-size:7.85px;line-height:9.03px;color:#3a6540;transform:scaleY(1.2);transform-origin:50% 4.41px;">Okres:</div>
<div class="inp" style="left:941.9px;top:190.7px;width:128px;height:16.8px"></div>
<div class="t" style="left:945.00px;top:195.23px;font-size:8px;line-height:9.2px;color:#333;transform:scaleY(1.2);transform-origin:50% 4.49px;">01.01.2022...31.12.2022</div>
<svg class="a" style="left:1056px;top:192px" width="14" height="14" viewBox="0 0 14 14"><g fill="none" stroke="#8cb33a" stroke-width="0.9"><rect x="1.5" y="2.5" width="10.5" height="10"/><path d="M1.5 5 H12 M4 1 V3.5 M9.5 1 V3.5"/></g><g fill="#8cb33a"><rect x="3.6" y="6.8" width="1.3" height="1.2"/><rect x="6.1" y="6.8" width="1.3" height="1.2"/><rect x="8.6" y="6.8" width="1.3" height="1.2"/><rect x="3.6" y="9.3" width="1.3" height="1.2"/><rect x="6.1" y="9.3" width="1.3" height="1.2"/><rect x="8.6" y="9.3" width="1.3" height="1.2"/></g></svg>
<div class="btn" style="left:1078px;top:191px;width:19px;height:17.4px;background:#dcdcdc"></div>
<svg class="a" style="left:1078px;top:191px" width="19" height="18"><path d="M3.4 3.2 L15.6 15.2 M15.6 3.2 L3.4 15.2" stroke="#6f8a9b" stroke-width="1"/></svg>
<div class="btn" style="left:942px;top:212.7px;width:155px;height:18px"></div>
<div class="t" style="left:1019.50px;width:0;top:217.43px;font-size:8px;line-height:9.2px;color:#5f7788;display:flex;justify-content:center;transform:scaleY(1.2);transform-origin:50% 4.49px;">Przelicz</div>
<div class="t" style="left:942.00px;top:237.73px;font-size:8px;line-height:9.2px;color:#3a6540;transform:scaleY(1.2);transform-origin:50% 4.49px;">Definicja nieobecności:</div>
<div class="inp" style="left:942px;top:255.6px;width:154.5px;height:17px"></div>
<svg class="a" style="left:1083.0px;top:260.3px" width="12" height="9" viewBox="0 0 12 9"><g fill="#8cb33a"><rect x="0.5" y="0.7" width="1.6" height="1.4"/><rect x="0.5" y="3.6" width="1.6" height="1.4"/><rect x="0.5" y="6.5" width="1.6" height="1.4"/><rect x="3.3" y="0.9" width="7.6" height="1"/><rect x="3.3" y="3.8" width="7.6" height="1"/><rect x="3.3" y="6.7" width="7.6" height="1"/></g></svg>
<div class="t" style="left:942.00px;top:280.83px;font-size:8px;line-height:9.2px;color:#3a6540;transform:scaleY(1.2);transform-origin:50% 4.49px;">Pracownik:</div>
<div class="inp" style="left:942px;top:299px;width:154.5px;height:17px"></div>
<svg class="a" style="left:1083.0px;top:303.7px" width="12" height="9" viewBox="0 0 12 9"><g fill="#8cb33a"><rect x="0.5" y="0.7" width="1.6" height="1.4"/><rect x="0.5" y="3.6" width="1.6" height="1.4"/><rect x="0.5" y="6.5" width="1.6" height="1.4"/><rect x="3.3" y="0.9" width="7.6" height="1"/><rect x="3.3" y="3.8" width="7.6" height="1"/><rect x="3.3" y="6.7" width="7.6" height="1"/></g></svg>
<div class="t" style="left:942.00px;top:323.63px;font-size:8px;line-height:9.2px;color:#3a6540;transform:scaleY(1.2);transform-origin:50% 4.49px;">Rok:</div>
<div class="a" style="left:942px;top:341.7px;width:118px;height:18px;background:#dedede;border:1px solid #d6d6d6"></div>
<div class="btn" style="left:1068px;top:342px;width:28.5px;height:17.5px"></div>
<svg class="a" style="left:1068px;top:342px" width="29" height="18"><path d="M5.2 15.4 L6.1 11.5 L14.6 3.0 C15.2 2.4 16.1 2.4 16.7 3.0 L17.5 3.8 C18.1 4.4 18.1 5.3 17.5 5.9 L9.0 14.4 Z M13.4 4.2 L16.3 7.1 M6.1 11.5 L9.0 14.4" fill="none" stroke="#6f8a9b" stroke-width="1"/></svg>
<div class="t" style="left:942.00px;top:366.83px;font-size:8px;line-height:9.2px;color:#3a6540;transform:scaleY(1.2);transform-origin:50% 4.49px;">Wydział:</div>
<div class="inp" style="left:942px;top:385px;width:154.5px;height:17px"></div>
<svg class="a" style="left:1083.0px;top:389.7px" width="12" height="9" viewBox="0 0 12 9"><g fill="#8cb33a"><rect x="0.5" y="0.7" width="1.6" height="1.4"/><rect x="0.5" y="3.6" width="1.6" height="1.4"/><rect x="0.5" y="6.5" width="1.6" height="1.4"/><rect x="3.3" y="0.9" width="7.6" height="1"/><rect x="3.3" y="3.8" width="7.6" height="1"/><rect x="3.3" y="6.7" width="7.6" height="1"/></g></svg>
<div class="a" style="left:934.3px;top:411.1px;width:169.5px;height:63.4px;background:#f8f8f8;border:1px solid #ebebeb;border-radius:3px"></div>
<div class="btn" style="left:942px;top:417px;width:154.7px;height:17.7px"></div>
<div class="t" style="left:1019.50px;width:0;top:421.43px;font-size:8px;line-height:9.2px;color:#5f7788;display:flex;justify-content:center;transform:scaleY(1.2);transform-origin:50% 4.49px;">Wyczyść parametry</div>
<div class="btn" style="left:942px;top:452.3px;width:154.7px;height:17.2px"></div>
<div class="t" style="left:1019.50px;width:0;top:455.83px;font-size:8px;line-height:9.2px;color:#5f7788;display:flex;justify-content:center;transform:scaleY(1.2);transform-origin:50% 4.49px;">Zapisz zestaw parametrów</div>
</body></html>
